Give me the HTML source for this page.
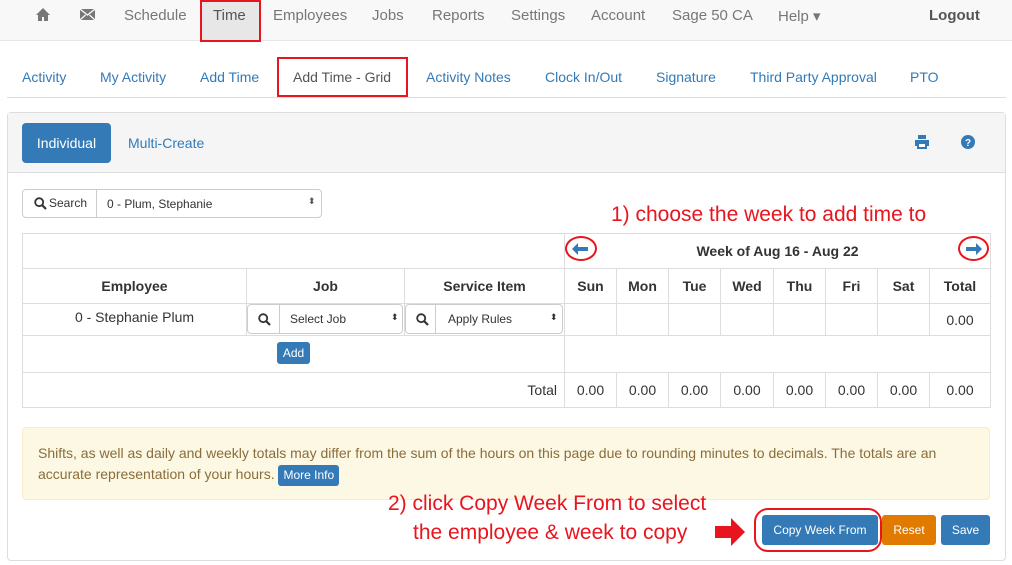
<!DOCTYPE html>
<html><head><meta charset="utf-8"><style>
*{box-sizing:border-box;margin:0;padding:0}
body{width:1012px;height:565px;background:#fff;font-family:"Liberation Sans",sans-serif;font-size:14px;color:#333;position:relative;overflow:hidden}
.a{position:absolute}
.nav{left:0;top:0;width:1012px;height:41px;background:#f8f8f8;border-bottom:1px solid #e7e7e7}
.nav span{position:absolute;top:7px;color:#777;font-size:15px}
.tab{position:absolute;top:69px;color:#337ab7;font-size:14px}
.red{border:2px solid #e8141e}
table{border-collapse:collapse;position:absolute;left:22px;top:233px;width:969px}
td,th{border:1px solid #ddd;font-size:14px;text-align:center}
th{font-weight:bold}
.sel{position:absolute;border:1px solid #ccc;border-radius:4px;background:#fff;font-size:12px}
.btn{position:absolute;color:#fff;border-radius:3px;font-size:12px;text-align:center}
.ann{position:absolute;color:#e8141e;font-size:21px}
</style></head><body>
<div class="a nav">
<svg class="a" style="left:36px;top:8px" width="14" height="13" viewBox="0 0 14 13"><path d="M7 0L0 7h2v6h4V9h2v4h4V7h2z" fill="#777"/></svg>
<svg class="a" style="left:80px;top:9px" width="15" height="11" viewBox="0 0 15 11"><rect width="15" height="11" fill="#777"/><path d="M0 0l7.5 6L15 0M0 11l5.5-5M15 11L9.5 6" stroke="#f8f8f8" stroke-width="1.3" fill="none"/></svg>
<span style="left:124px">Schedule</span>
<div class="a" style="left:200px;top:0;width:60px;height:42px;background:#e7e7e7" ></div>
<div class="a red" style="left:200px;top:0;width:61px;height:42px"></div>
<span style="left:213px;color:#555">Time</span>
<span style="left:273px">Employees</span>
<span style="left:372px">Jobs</span>
<span style="left:432px">Reports</span>
<span style="left:511px">Settings</span>
<span style="left:591px">Account</span>
<span style="left:672px">Sage 50 CA</span>
<span style="left:778px">Help ▾</span>
<span style="left:929px;font-weight:bold;color:#555">Logout</span>
</div>
<div class="a" style="left:7px;top:97px;width:999px;border-top:1px solid #ddd"></div>
<span class="tab" style="left:22px">Activity</span>
<span class="tab" style="left:100px">My Activity</span>
<span class="tab" style="left:200px">Add Time</span>
<div class="a red" style="left:277px;top:57px;width:131px;height:40px"></div>
<span class="tab" style="left:293px;color:#555">Add Time - Grid</span>
<span class="tab" style="left:426px">Activity Notes</span>
<span class="tab" style="left:545px">Clock In/Out</span>
<span class="tab" style="left:656px">Signature</span>
<span class="tab" style="left:750px">Third Party Approval</span>
<span class="tab" style="left:910px">PTO</span>

<div class="a" style="left:7px;top:112px;width:999px;height:449px;border:1px solid #ddd;border-radius:4px"></div>
<div class="a" style="left:8px;top:113px;width:997px;height:60px;background:#f5f5f5;border-bottom:1px solid #ddd"></div>
<div class="btn" style="left:22px;top:123px;width:89px;height:40px;line-height:40px;background:#337ab7;font-size:14px;border-radius:4px">Individual</div>
<span class="a" style="left:128px;top:135px;color:#337ab7">Multi-Create</span>
<svg class="a" style="left:915px;top:135px" width="14" height="14" viewBox="0 0 14 14"><path d="M3 0h8v4H3zM0 5h14v6h-2v3H2v-3H0z" fill="#337ab7"/><rect x="4" y="9" width="6" height="3" fill="#fff"/></svg>
<svg class="a" style="left:961px;top:135px" width="14" height="14" viewBox="0 0 14 14"><circle cx="7" cy="7" r="7" fill="#337ab7"/><text x="7" y="11" font-size="10" font-weight="bold" fill="#fff" text-anchor="middle" font-family="Liberation Sans">?</text></svg>

<div class="sel" style="left:22px;top:189px;width:300px;height:29px">
<div class="a" style="left:0;top:0;width:74px;height:27px;border-right:1px solid #ccc;line-height:27px;padding-left:26px">Search</div>
<svg class="a" style="left:11px;top:7px" width="13" height="13" viewBox="0 0 13 13"><circle cx="5.2" cy="5.2" r="4" stroke="#333" stroke-width="1.8" fill="none"/><path d="M8 8l4 4" stroke="#333" stroke-width="2.2"/></svg>
<span class="a" style="left:84px;top:7px">0 - Plum, Stephanie</span>
<span class="a" style="left:285px;top:6px;font-size:9px;color:#555">⬍</span>
</div>
<div class="ann" style="left:611px;top:203px">1) choose the week to add time to</div>

<table>
<tr style="height:35px"><td colspan="3" style="border-right:1px solid #ddd"></td><th colspan="8" style="font-size:14px;border-left:none">Week of Aug 16 - Aug 22</th></tr>
<tr style="height:35px"><th style="width:224px">Employee</th><th style="width:158px">Job</th><th style="width:160px">Service Item</th><th style="width:52px">Sun</th><th style="width:52px">Mon</th><th style="width:52px">Tue</th><th style="width:53px">Wed</th><th style="width:52px">Thu</th><th style="width:52px">Fri</th><th style="width:52px">Sat</th><th>Total</th></tr>
<tr style="height:32px"><td style="vertical-align:top;padding-top:5px">0 - Stephanie Plum</td><td></td><td></td><td></td><td></td><td></td><td></td><td></td><td></td><td></td><td>0.00</td></tr>
<tr style="height:37px"><td colspan="3"></td><td colspan="8"></td></tr>
<tr style="height:35px"><td colspan="3" style="text-align:right;padding-right:7px">Total</td><td>0.00</td><td>0.00</td><td>0.00</td><td>0.00</td><td>0.00</td><td>0.00</td><td>0.00</td><td>0.00</td></tr>
</table>
<div class="sel" style="left:247px;top:304px;width:156px;height:30px"><svg class="a" style="left:10px;top:8px" width="13" height="13" viewBox="0 0 13 13"><circle cx="5.2" cy="5.2" r="4" stroke="#333" stroke-width="1.8" fill="none"/><path d="M8 8l4 4" stroke="#333" stroke-width="2.2"/></svg><div class="a" style="left:31px;top:0;height:28px;border-left:1px solid #ccc"></div><span class="a" style="left:42px;top:7px">Select Job</span><span class="a" style="left:143px;top:7px;font-size:9px">⬍</span></div>
<div class="sel" style="left:405px;top:304px;width:158px;height:30px"><svg class="a" style="left:10px;top:8px" width="13" height="13" viewBox="0 0 13 13"><circle cx="5.2" cy="5.2" r="4" stroke="#333" stroke-width="1.8" fill="none"/><path d="M8 8l4 4" stroke="#333" stroke-width="2.2"/></svg><div class="a" style="left:29px;top:0;height:28px;border-left:1px solid #ccc"></div><span class="a" style="left:42px;top:7px">Apply Rules</span><span class="a" style="left:144px;top:7px;font-size:9px">⬍</span></div>
<div class="btn" style="left:277px;top:342px;width:33px;height:22px;line-height:22px;background:#337ab7">Add</div>
<div class="a" style="left:565px;top:236px;width:32px;height:25px;border:2px solid #e8141e;border-radius:50%"></div>
<svg class="a" style="left:572px;top:243px" width="16" height="12" viewBox="0 0 16 12"><path d="M0 6L6 0v4h10v4H6v4z" fill="#337ab7"/></svg>
<div class="a" style="left:958px;top:236px;width:31px;height:25px;border:2px solid #e8141e;border-radius:50%"></div>
<svg class="a" style="left:966px;top:243px" width="16" height="12" viewBox="0 0 16 12"><path d="M16 6L10 0v4H0v4h10v4z" fill="#337ab7"/></svg>

<div class="a" style="left:22px;top:427px;width:968px;height:73px;background:#fcf8e3;border:1px solid #faebcc;border-radius:4px;color:#8a6d3b;font-size:14px;line-height:21px;padding:15px 15px">Shifts, as well as daily and weekly totals may differ from the sum of the hours on this page due to rounding minutes to decimals. The totals are an accurate representation of your hours. <span style="display:inline-block;background:#337ab7;color:#fff;font-size:12px;padding:0 5px;border-radius:3px;line-height:21px">More Info</span></div>

<div class="ann" style="left:388px;top:492px">2) click Copy Week From to select</div>
<div class="ann" style="left:413px;top:521px">the employee &amp; week to copy</div>
<svg class="a" style="left:715px;top:518px" width="30" height="28" viewBox="0 0 30 28"><path d="M0 8h16V0l14 14-14 14v-8H0z" fill="#e8141e"/></svg>
<div class="a" style="left:754px;top:508px;width:128px;height:44px;border:2px solid #e8141e;border-radius:14px"></div>
<div class="btn" style="left:762px;top:515px;width:116px;height:30px;line-height:30px;background:#337ab7">Copy Week From</div>
<div class="btn" style="left:882px;top:515px;width:54px;height:30px;line-height:30px;background:#e07b00">Reset</div>
<div class="btn" style="left:941px;top:515px;width:49px;height:30px;line-height:30px;background:#337ab7">Save</div>
</body></html>
